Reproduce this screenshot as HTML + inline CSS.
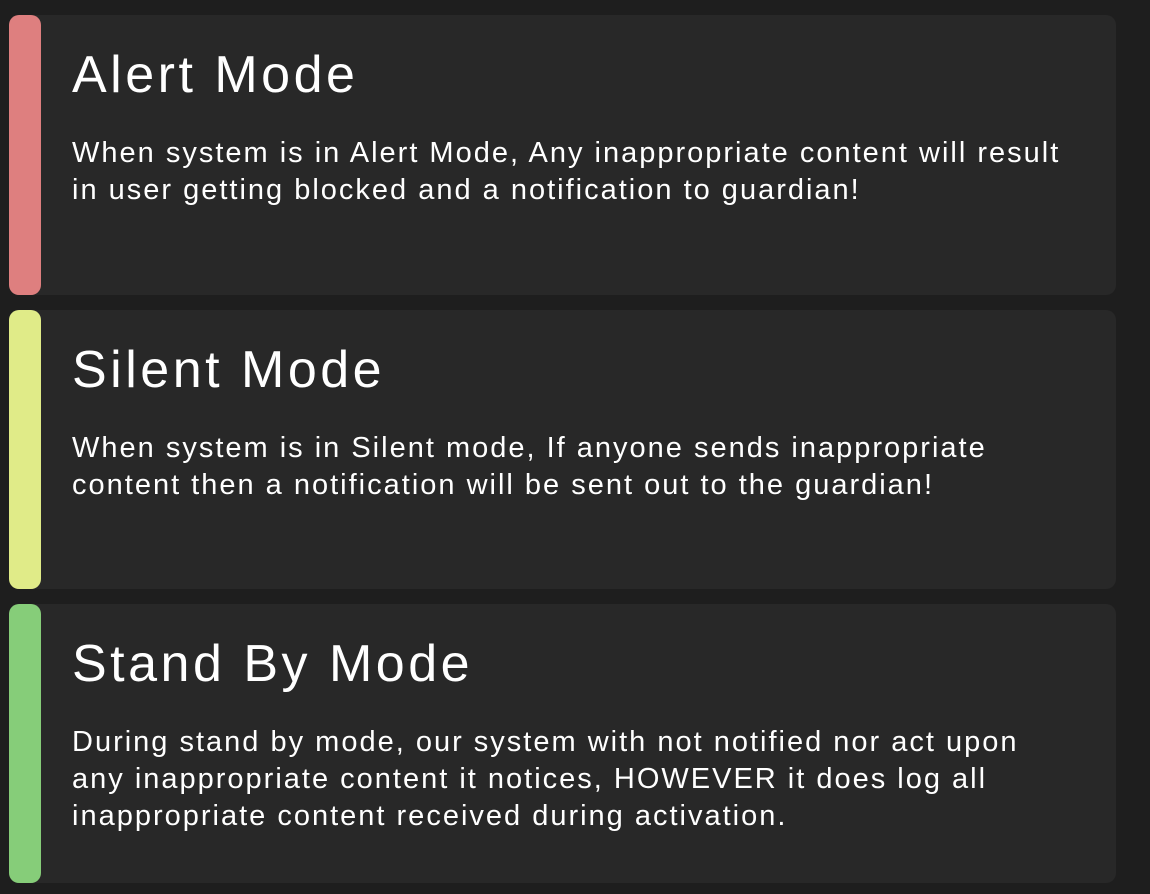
<!DOCTYPE html>
<html><head><style>
body{margin:0;background:#1e1e1e;width:1150px;height:894px;overflow:hidden;font-family:"Liberation Sans",sans-serif;color:#fff}
.card{position:absolute;left:9px;width:1107px;height:280px;background:#282828;border-radius:10px}
.bar{position:absolute;left:0;top:0;width:32px;height:100%;border-radius:10px}
h1{position:absolute;left:63px;top:30px;margin:0;font-weight:normal;font-size:52px;line-height:60px;letter-spacing:3.5px;white-space:nowrap}
p{position:absolute;left:63px;top:120px;margin:0;font-size:29px;line-height:37px;letter-spacing:2.0px;white-space:nowrap}
</style></head><body>
<div class="card" style="top:15px"><div class="bar" style="background:#de7f7f"></div><h1>Alert Mode</h1><p>When system is in Alert Mode, Any inappropriate content will result<br>in user getting blocked and a notification to guardian!</p></div>
<div class="card" style="top:310px;height:279px"><div class="bar" style="background:#e0eb88"></div><h1>Silent Mode</h1><p>When system is in Silent mode, If anyone sends inappropriate<br>content then a notification will be sent out to the guardian!</p></div>
<div class="card" style="top:604px;height:279px"><div class="bar" style="background:#86cd79"></div><h1>Stand By Mode</h1><p>During stand by mode, our system with not notified nor act upon<br>any inappropriate content it notices, HOWEVER it does log all<br>inappropriate content received during activation.</p></div>
</body></html>
